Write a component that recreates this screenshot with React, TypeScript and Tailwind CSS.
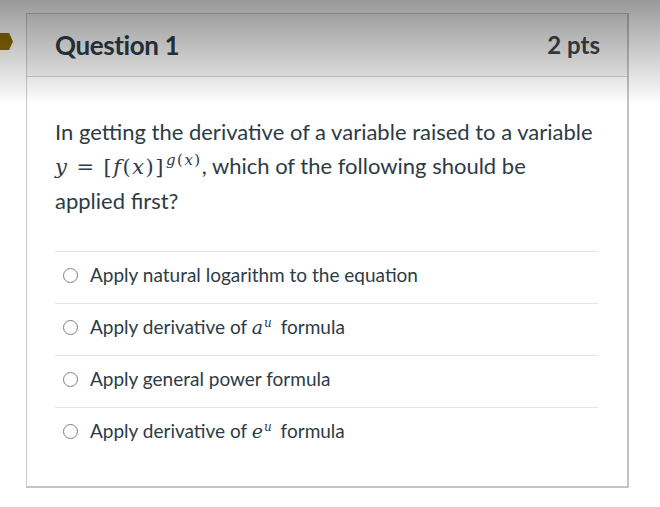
import React from 'react';

const mathFont = "font-['DejaVu_Serif',serif]";

const answers: React.ReactNode[] = [
  'Apply natural logarithm to the equation',
  <>
    Apply derivative of{' '}
    <span className={`${mathFont} italic text-[19px] mr-[4px]`}>
      a<sup className="text-[12px] relative -top-[7px] ml-[1px]">u</sup>
    </span>{' '}
    formula
  </>,
  'Apply general power formula',
  <>
    Apply derivative of{' '}
    <span className={`${mathFont} italic text-[19px] mr-[4px]`}>
      e<sup className="text-[12px] relative -top-[7px] ml-[1px]">u</sup>
    </span>{' '}
    formula
  </>,
];

export default function App() {
  return (
    <div className="relative w-[660px] h-[507px] bg-white overflow-hidden font-['Lato',sans-serif] text-[#2d3b45]">
      {/* marker */}
      <div className="absolute left-0 top-[33px] w-[13px] h-[17px] bg-[#8b6b00] [clip-path:polygon(0_0,70%_0,100%_50%,70%_100%,0_100%)]" />

      <div className="pt-[13px] pl-[26px] pr-[30px]">
        <div className="w-[603px] h-[475px] border border-[#c7cdd1] border-r-2 border-b-2 border-r-[#c4c4c4] border-b-[#c4c4c4]">
          <div className="h-[63px] bg-[#f5f5f5] border-b border-[#c7cdd1] flex items-center justify-between pl-[28px] pr-[27px]">
            <h2 className="text-[26px] font-bold tracking-[-0.4px]">Question 1</h2>
            <span className="text-[24px] font-bold text-[#3d454c]">2 pts</span>
          </div>

          <div className="px-[28px] pt-[38px]">
            <p className="text-[22px] leading-[34px]">
              In getting the derivative of a variable raised to a variable
              <br />
              <span className={`${mathFont} text-[21px] tracking-[1.5px]`}>
                <i>y</i>
                <span className="mx-[8px]">=</span>[<i>f</i>(<i>x</i>)]
                <sup className="text-[15px] relative -top-[9px] ml-[1px]">
                  <i>g</i>(<i>x</i>)
                </sup>
              </span>
              , which of the following should be
              <br />
              applied first?
            </p>

            <div className="mt-[33px] mr-[1px]">
              {answers.map((a, i) => (
                <div
                  key={i}
                  className="h-[52px] border-t border-[#e3e6e8] flex items-center pl-[8px] pb-[5px] text-[19px]"
                >
                  <span className="w-[15px] h-[15px] rounded-full border-[1.5px] border-[#7a8085] bg-white mr-[12px] shrink-0" />
                  <span>{a}</span>
                </div>
              ))}
            </div>
          </div>
        </div>
      </div>

      {/* top shadow overlay */}
      <div className="pointer-events-none absolute inset-x-0 top-0 h-[105px] bg-gradient-to-b from-[rgba(0,0,0,0.4)] to-transparent" />
    </div>
  );
}
